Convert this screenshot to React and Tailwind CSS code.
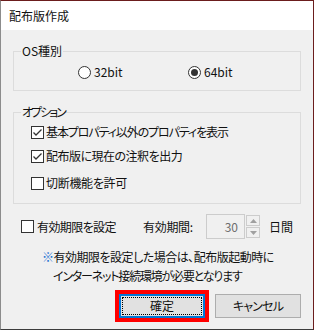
import React from "react";

const F = "[font-family:'Noto_Sans_CJK_JP','Noto_Sans',sans-serif] [font-feature-settings:'palt']";

function Check({ checked }) {
  return (
    <span className="w-[13px] h-[13px] border border-[#333333] bg-white flex items-center justify-center shrink-0">
      {checked && (
        <svg width="11" height="11" viewBox="0 0 11 11">
          <polyline points="1.5,5.5 4,8 9.5,2.5" fill="none" stroke="#333333" strokeWidth="1.3" />
        </svg>
      )}
    </span>
  );
}

function Radio({ checked }) {
  return (
    <span className="w-[13px] h-[13px] rounded-full border border-[#333333] bg-white flex items-center justify-center shrink-0">
      {checked && <span className="w-[7px] h-[7px] rounded-full bg-[#333333]" />}
    </span>
  );
}

export default function App() {
  return (
    <div className={`w-[314px] h-[330px] bg-[#f0f0f0] border-t border-r border-t-[#6b1d1d] border-r-[#6b1d1d] border-l border-b border-l-[#8c8c8c] border-b-[#3c3c3c] flex flex-col text-[12px] text-[#111111] ${F}`}>
      <div className="h-[29px] bg-white flex items-center pl-[8px] leading-none">配布版作成</div>
      <div className="px-[12px] flex flex-col">
        {/* OS group */}
        <div className="mt-[21px] h-[40px] border border-[#dcdcdc] flex flex-col">
          <div className="-mt-[9px] h-[16px] leading-[16px] flex">
            <span className="ml-[7px] px-[1px] bg-[#f0f0f0]">OS種別</span>
          </div>
          <div className="h-[26px] flex items-center pl-[64px]">
            <div className="w-[110px] flex items-center gap-[3px]">
              <Radio />
              <span>32bit</span>
            </div>
            <div className="flex items-center gap-[3px]">
              <Radio checked />
              <span>64bit</span>
            </div>
          </div>
        </div>
        {/* Options group */}
        <div className="mt-[21px] h-[92px] border border-[#dcdcdc] flex flex-col">
          <div className="-mt-[9px] h-[16px] leading-[16px] flex">
            <span className="ml-[7px] px-[1px] bg-[#f0f0f0] tracking-[-2px]">オプション</span>
          </div>
          <div className="h-[24px] flex items-center pl-[17px] gap-[2px]">
            <Check checked />
            <span className="tracking-[-1.1px]">基本プロパティ以外のプロパティを表示</span>
          </div>
          <div className="h-[24px] flex items-center pl-[17px] gap-[2px]">
            <Check checked />
            <span className="tracking-[-0.5px]">配布版に現在の注釈を出力</span>
          </div>
          <div className="mt-[3px] h-[24px] flex items-center pl-[17px] gap-[2px]">
            <Check />
            <span className="tracking-[-0.3px]">切断機能を許可</span>
          </div>
        </div>
        {/* Expiry row */}
        <div className="mt-[9px] h-[27px] flex items-center pl-[8px]">
          <div className="w-[122px] flex items-center gap-[3px]">
            <Check />
            <span className="tracking-[-0.6px]">有効期限を設定</span>
          </div>
          <span className="w-[63px] tracking-[-0.3px]">有効期間:</span>
          <div className="w-[39px] h-[25px] border border-[#cccccc] bg-[#f0f0f0] flex items-center justify-end pr-[6px] text-[#6d6d6d]">30</div>
          <div className="ml-[1px] w-[14px] h-[23px] flex flex-col gap-[1px]">
            <div className="flex-1 border border-[#cccccc] flex items-center justify-center">
              <svg width="7" height="4" viewBox="0 0 7 4"><polygon points="0,4 3.5,0 7,4" fill="#a0a0a0" /></svg>
            </div>
            <div className="flex-1 border border-[#cccccc] flex items-center justify-center">
              <svg width="7" height="4" viewBox="0 0 7 4"><polygon points="0,0 3.5,4 7,0" fill="#a0a0a0" /></svg>
            </div>
          </div>
          <span className="ml-[9px]">日間</span>
        </div>
        {/* Notes */}
        <div className="mt-[7px] flex flex-col leading-[19px]">
          <div className="pl-[29px] tracking-[-0.5px]"><span className="text-[#1a6fd0]">※</span>有効期限を設定した場合は、配布版起動時に</div>
          <div className="pl-[40px] tracking-[-1.2px]">インターネット接続環境が必要となります</div>
        </div>
        {/* Buttons */}
        <div className="mt-[9px] flex justify-end gap-[10px]">
          <button className="w-[86px] h-[24px] border-2 border-[#0078d7] bg-[#e1e1e1] p-[1px] shadow-[0_0_0_4px_#ff0000] flex">
            <span className="flex-1 border border-dotted border-black flex items-center justify-center">確定</span>
          </button>
          <button className="w-[86px] h-[24px] border border-[#adadad] bg-[#e1e1e1] flex items-center justify-center tracking-[-0.8px]">キャンセル</button>
        </div>
      </div>
    </div>
  );
}
